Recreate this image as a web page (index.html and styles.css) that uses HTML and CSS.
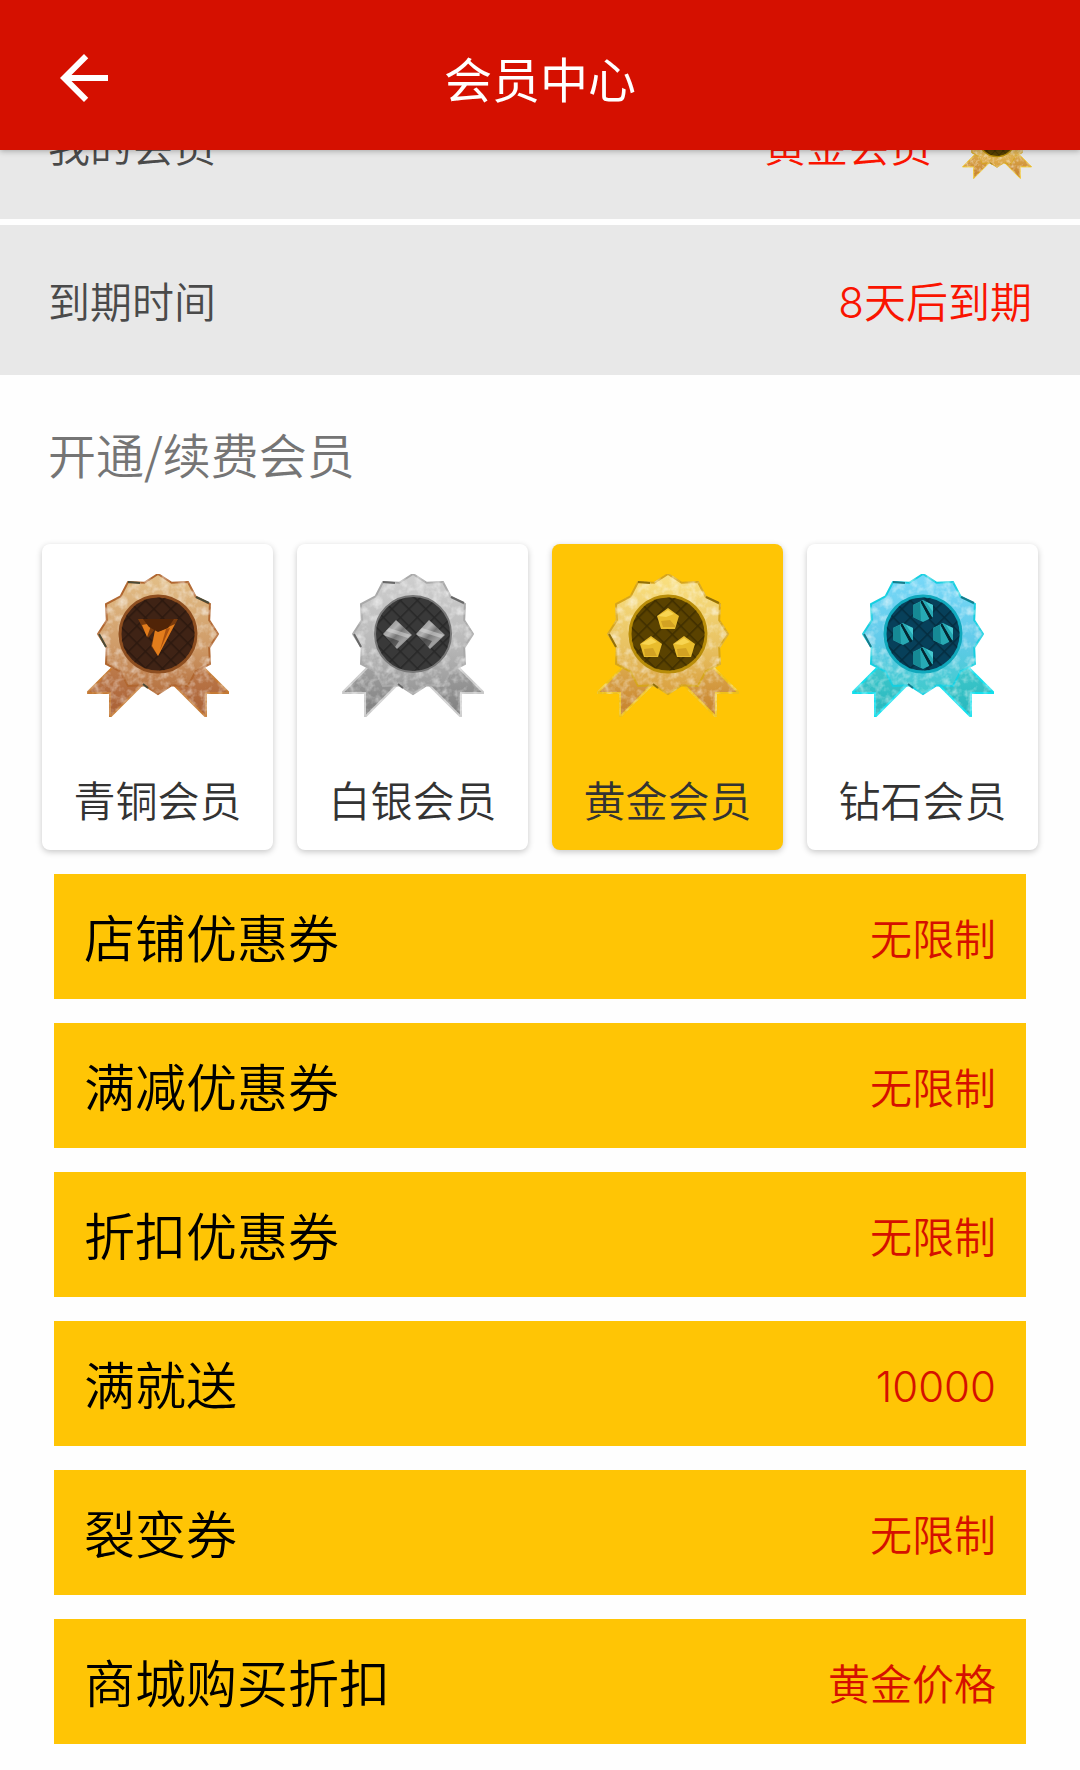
FILE: index.html
```html
<!DOCTYPE html>
<html lang="zh-CN">
<head>
    <meta charset="UTF-8">
    <meta name="viewport" content="width=device-width, initial-scale=1.0">
    <title>会员中心</title>
    <link rel="stylesheet" href="styles.css">
</head>
<body>
    <!-- shared medal shapes and metal fills -->
    <svg class="defs" width="0" height="0" aria-hidden="true">
        <defs>
            <path id="star" d="M72 0 85.700 8.800 102 8 109.500 22.500 124 30 123.200 46.300 132 60 123.200 73.700 124 90 109.500 97.500 102 112 85.700 111.200 72 120 58.300 111.200 42 112 34.500 97.500 20 90 20.800 73.700 12 60 20.800 46.300 20 30 34.500 22.500 42 8 58.300 8.800Z"/>
            <path id="ribbons" d="M27 93 1 119H24V143L58 109ZM117 93 143 119H120V143L86 109Z"/>
            <path id="pentagon" d="M0-11 11-3 7 10H-7L-11-3Z"/>
            <g id="hexagon">
                <path d="M0-11 10-6V6L0 11-10 6V-6Z" fill="#27a9b4"/>
                <path d="M-10-6-3-9-2 10-10 6Z" fill="#168995"/>
                <path d="M-1-10 9 7 7 8-2-9Z" fill="#032530" stroke="#032530"/>
                <path d="M3-9 10-6V1Z" fill="#43c8cf"/>
            </g>
            <g id="slab">
                <path d="M-14 0-1-14 15 1 0 15Z" fill="url(#shine)"/>
                <path d="M-14 1 2 7-2 13Z" fill="#222" opacity=".5"/>
                <path d="M-8-6 14 1 11 4-11-3Z" fill="#ddd" opacity=".5"/>
            </g>
            <linearGradient id="bronze" x1="0" y1="0" x2="0" y2="1">
                <stop offset="0" stop-color="#e3bf88"/>
                <stop offset=".6" stop-color="#cf9b68"/>
                <stop offset="1" stop-color="#b5703f"/>
            </linearGradient>
            <linearGradient id="bronze-dark" x1="0" y1="0" x2="0" y2="1">
                <stop offset="0" stop-color="#bd7b4b"/>
                <stop offset="1" stop-color="#a85e33"/>
            </linearGradient>
            <linearGradient id="silver" x1="0" y1="0" x2="0" y2="1">
                <stop offset="0" stop-color="#cfcfcf"/>
                <stop offset=".6" stop-color="#b8b8b8"/>
                <stop offset="1" stop-color="#969696"/>
            </linearGradient>
            <linearGradient id="silver-dark" x1="0" y1="0" x2="0" y2="1">
                <stop offset="0" stop-color="#a0a0a0"/>
                <stop offset="1" stop-color="#7d7d7d"/>
            </linearGradient>
            <linearGradient id="gold" x1="0" y1="0" x2="0" y2="1">
                <stop offset="0" stop-color="#fae181"/>
                <stop offset=".6" stop-color="#e8c262"/>
                <stop offset="1" stop-color="#d99f3f"/>
            </linearGradient>
            <linearGradient id="gold-dark" x1="0" y1="0" x2="0" y2="1">
                <stop offset="0" stop-color="#dca94c"/>
                <stop offset="1" stop-color="#c47e2b"/>
            </linearGradient>
            <linearGradient id="diamond" x1="0" y1="0" x2="0" y2="1">
                <stop offset="0" stop-color="#78d8f8"/>
                <stop offset=".55" stop-color="#62cbea"/>
                <stop offset="1" stop-color="#3fcacc"/>
            </linearGradient>
            <linearGradient id="diamond-dark" x1="0" y1="0" x2="0" y2="1">
                <stop offset="0" stop-color="#3fc8cc"/>
                <stop offset="1" stop-color="#26b6bc"/>
            </linearGradient>
            <linearGradient id="shine" x1="0" y1="0" x2="1" y2="1">
                <stop offset="0" stop-color="#777"/>
                <stop offset=".35" stop-color="#b4b4b4"/>
                <stop offset=".5" stop-color="#777"/>
                <stop offset=".7" stop-color="#a0a0a0"/>
                <stop offset="1" stop-color="#666"/>
            </linearGradient>
            <pattern id="quilt" width="12" height="12" patternUnits="userSpaceOnUse" patternTransform="rotate(45)">
                <path d="M0 0H12M0 0V12" stroke="#000" stroke-opacity=".3" stroke-width="3"/>
            </pattern>
            <filter id="grain" x="0" y="0" width="100%" height="100%" color-interpolation-filters="sRGB">
                <feTurbulence type="fractalNoise" baseFrequency=".12" numOctaves="3" seed="4"/>
                <feColorMatrix values="0 0 0 0 1  0 0 0 0 1  0 0 0 0 1  1.200 0 0 0 -.5"/>
                <feComposite in2="SourceGraphic" operator="in" result="noise"/>
                <feMerge>
                    <feMergeNode in="SourceGraphic"/>
                    <feMergeNode in="noise"/>
                </feMerge>
            </filter>
            <symbol id="medal-bronze" viewBox="0 0 144 144" overflow="visible">
                <g filter="url(#grain)">
                    <use href="#ribbons" fill="url(#bronze-dark)" stroke="#c47a35" stroke-width="2"/>
                    <use href="#star" fill="url(#bronze)" stroke="#b0662f" stroke-width="2"/>
                </g>
                <path d="M42 8 54 9M110 23 123 29M13 60 20 73M57 110 62 114" stroke="#4b4a35" stroke-width="2"/>
                <circle cx="72" cy="60" r="38" fill="#3f2315" stroke="#8f4f20" stroke-width="3"/>
                <circle cx="72" cy="60" r="37" fill="url(#quilt)"/>
                <path d="M52 45H92L72 82 65 72 70 54 62 64Z" fill="#7a3b0c"/>
                <path d="M56 51 66 49 61 63ZM74 57 89 50 72 82 66 72 69 56Z" fill="#e37d1c"/>
                <path d="M80 55 84 54 74 76Z" fill="#a9500f"/>
                <path d="M57 45H88L82 54 72 58 63 53Z" fill="#512407"/>
            </symbol>
            <symbol id="medal-silver" viewBox="0 0 144 144" overflow="visible">
                <g filter="url(#grain)">
                    <use href="#ribbons" fill="url(#silver-dark)" stroke="#c9c9c9" stroke-width="2"/>
                    <use href="#star" fill="url(#silver)" stroke="#a9a9a9" stroke-width="2"/>
                </g>
                <path d="M42 8 54 9M110 23 123 29M13 60 20 73M57 110 62 114" stroke="#686868" stroke-width="2"/>
                <circle cx="72" cy="60" r="38" fill="#393939" stroke="#777" stroke-width="2"/>
                <circle cx="72" cy="60" r="37" fill="url(#quilt)"/>
                <use href="#slab" x="56" y="60"/>
                <use href="#slab" x="89" y="60"/>
            </symbol>
            <symbol id="medal-gold" viewBox="0 0 144 144" overflow="visible">
                <g filter="url(#grain)">
                    <use href="#ribbons" fill="url(#gold-dark)" stroke="#efc118" stroke-width="2"/>
                    <use href="#star" fill="url(#gold)" stroke="#d6a51c" stroke-width="2"/>
                </g>
                <path d="M42 8 54 9M110 23 123 29M13 60 20 73M57 110 62 114" stroke="#927009" stroke-width="2"/>
                <circle cx="72" cy="60" r="38" fill="#5a4200" stroke="#b98d08" stroke-width="3"/>
                <circle cx="72" cy="60" r="37" fill="url(#quilt)"/>
                <g fill="#e9bc2c">
                    <use href="#pentagon" x="72" y="45"/>
                    <use href="#pentagon" x="55" y="73"/>
                    <use href="#pentagon" x="88" y="73"/>
                </g>
                <path d="M65 47 74 46 80 53 67 53ZM48 75 57 74 61 82H49ZM81 75 90 74 94 82H82Z" fill="#d3a222"/>
                <path d="M62 42 72 36 78 40 70 43ZM45 70 55 64 61 68 53 71ZM78 70 88 64 94 68 86 71Z" fill="#f8d551"/>
            </symbol>
            <symbol id="medal-diamond" viewBox="0 0 144 144" overflow="visible">
                <g filter="url(#grain)">
                    <use href="#ribbons" fill="url(#diamond-dark)" stroke="#12dfec" stroke-width="2"/>
                    <use href="#star" fill="url(#diamond)" stroke="#16cfe0" stroke-width="2"/>
                </g>
                <path d="M42 8 54 9M110 23 123 29M13 60 20 73M57 110 62 114" stroke="#147c8c" stroke-width="2"/>
                <circle cx="72" cy="60" r="38" fill="#07405a" stroke="#10a9bd" stroke-width="3"/>
                <circle cx="72" cy="60" r="37" fill="url(#quilt)"/>
                <use href="#hexagon" x="72" y="37"/>
                <use href="#hexagon" x="52" y="60"/>
                <use href="#hexagon" x="92" y="60"/>
                <use href="#hexagon" x="72" y="84"/>
            </symbol>
        </defs>
    </svg>

    <header class="topbar">
        <button type="button" class="back" aria-label="返回">
            <svg viewBox="0 0 24 24" width="72" height="72" fill="currentColor">
                <path d="M20 11H7.830l5.590-5.590L12 4l-8 8 8 8 1.410-1.410L7.830 13H20z"/>
            </svg>
        </button>
        <h1>会员中心</h1>
    </header>

    <main>
        <dl class="info">
            <div class="info-row">
                <dt>我的会员</dt>
                <dd class="with-medal">黄金会员 <svg class="medal-small"><use href="#medal-gold"/></svg></dd>
            </div>
            <div class="info-row">
                <dt>到期时间</dt>
                <dd><span class="number">8</span>天后到期</dd>
            </div>
        </dl>

        <h2>开通/续费会员</h2>

        <div class="levels">
            <button type="button" class="level">
                <svg class="medal"><use href="#medal-bronze"/></svg>
                <span>青铜会员</span>
            </button>
            <button type="button" class="level">
                <svg class="medal"><use href="#medal-silver"/></svg>
                <span>白银会员</span>
            </button>
            <button type="button" class="level active" aria-pressed="true">
                <svg class="medal"><use href="#medal-gold"/></svg>
                <span>黄金会员</span>
            </button>
            <button type="button" class="level">
                <svg class="medal"><use href="#medal-diamond"/></svg>
                <span>钻石会员</span>
            </button>
        </div>

        <dl class="benefits">
            <div class="benefit"><dt>店铺优惠券</dt><dd>无限制</dd></div>
            <div class="benefit"><dt>满减优惠券</dt><dd>无限制</dd></div>
            <div class="benefit"><dt>折扣优惠券</dt><dd>无限制</dd></div>
            <div class="benefit"><dt>满就送</dt><dd><span class="number">10000</span></dd></div>
            <div class="benefit"><dt>裂变券</dt><dd>无限制</dd></div>
            <div class="benefit"><dt>商城购买折扣</dt><dd>黄金价格</dd></div>
        </dl>
    </main>
</body>
</html>
```

FILE: styles.css
```css
* {
    box-sizing: border-box;
}

body {
    margin: 0;
    font-family: "Noto Sans CJK SC", sans-serif;
    font-weight: 350;
    background-color: #fefefe;
    color: #333;
}

h1, h2, dl, dd {
    margin: 0;
}

button {
    padding: 0;
    border: 0;
    background: none;
    color: inherit;
    font: inherit;
    cursor: pointer;
}

svg {
    display: block;
}

.defs {
    position: absolute;
}

.number {
    font-family: Inter, sans-serif;
    font-weight: 300;
    line-height: 1;
}

/* header stays put, the page scrolls under it */
.topbar {
    position: fixed;
    top: 0;
    left: 0;
    right: 0;
    z-index: 10;
    display: grid;
    grid-template-columns: 72px 1fr 72px;
    align-items: center;
    height: 150px;
    padding: 6px 48px 0;
    background-color: #d51000;
    color: #fff;
    box-shadow: 0 1px 6px rgba(0, 0, 0, 0.3);
}

.topbar h1 {
    padding-bottom: 2px;
    font-size: 48px;
    line-height: 72px;
    font-weight: 400;
    text-align: center;
}

main {
    padding: 69px 0 24px;
}

.info {
    display: flex;
    flex-direction: column;
    gap: 6px;
}

.info-row {
    display: flex;
    justify-content: space-between;
    align-items: center;
    padding: 39px 48px;
    background-color: #e8e8e8;
    color: #4a4a4a;
    font-size: 42px;
    line-height: 72px;
}

.info-row dd {
    color: #fa1400;
}

.with-medal {
    display: flex;
    align-items: center;
    gap: 30px;
}

.medal-small {
    width: 70px;
    height: 70px;
}

h2 {
    padding: 42px 48px 55px;
    color: #757575;
    font-size: 48px;
    line-height: 72px;
    font-weight: 350;
}

.levels {
    display: grid;
    grid-template-columns: repeat(4, 1fr);
    gap: 24px;
    padding: 0 42px;
}

.level {
    display: flex;
    flex-direction: column;
    align-items: center;
    gap: 48px;
    padding: 30px 0 18px;
    border-radius: 8px;
    background-color: #fff;
    font-size: 42px;
    line-height: 66px;
    box-shadow: 0 2px 6px rgba(0, 0, 0, 0.22);
}

.level.active {
    background-color: #ffc505;
}

.medal {
    width: 144px;
    height: 144px;
}

.benefits {
    display: flex;
    flex-direction: column;
    gap: 24px;
    padding: 24px 54px 0;
}

.benefit {
    display: flex;
    justify-content: space-between;
    align-items: center;
    padding: 24px 30px;
    background-color: #ffc505;
    line-height: 77px;
}

.benefit dt {
    color: #000;
    font-size: 51px;
}

.benefit dd {
    color: #d51000;
    font-size: 42px;
}
```
